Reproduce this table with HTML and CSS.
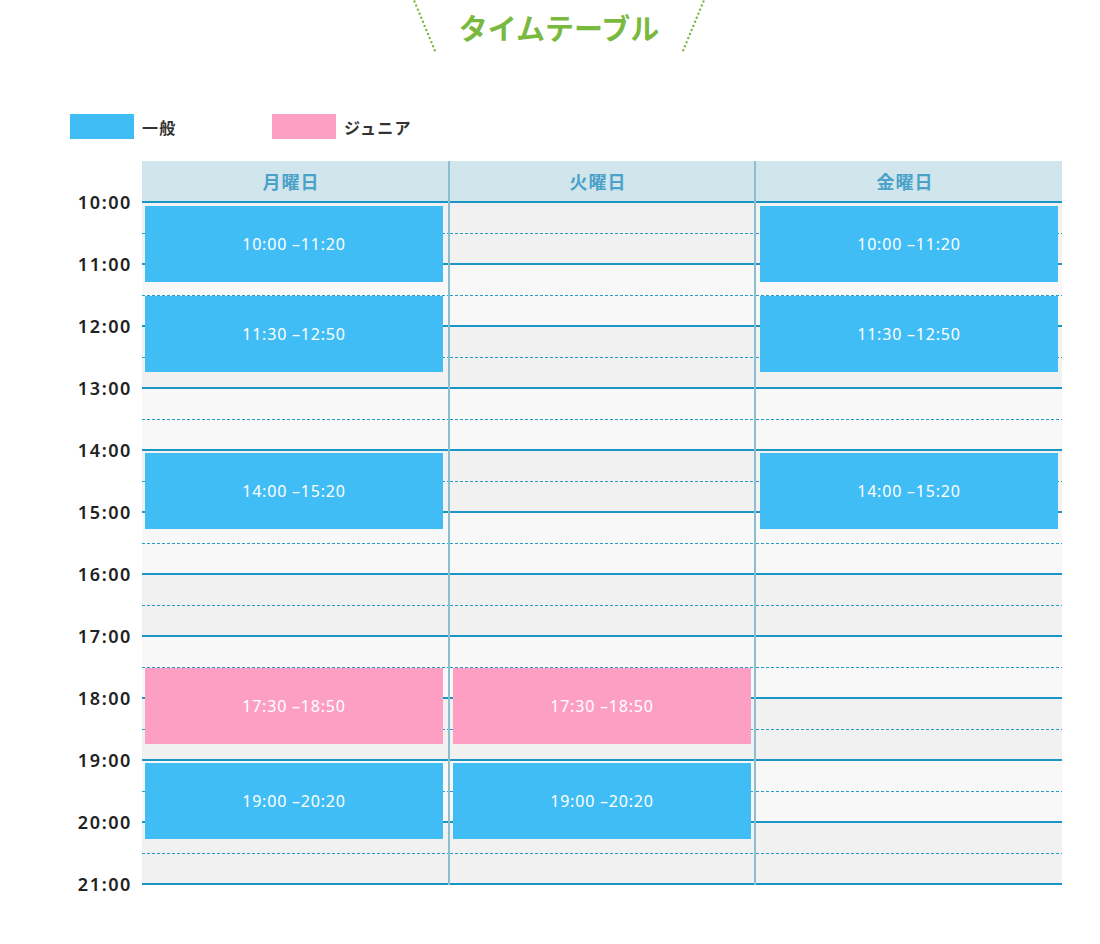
FILE: index.html
```html
<!DOCTYPE html>
<html lang="ja">
<head>
<meta charset="utf-8">
<title>タイムテーブル</title>
<link rel="stylesheet" href="styles.css">
</head>
<body>
<div class="page">
  <div class="title-row">
    <svg class="deco" width="24" height="54" viewBox="0 0 24 54"><line x1="1.5" y1="1.5" x2="22.5" y2="52" stroke="#7ab940" stroke-width="2.4" stroke-linecap="round" stroke-dasharray="0 4.4"/></svg>
    <h1 class="title">タイムテーブル</h1>
    <svg class="deco" width="24" height="54" viewBox="0 0 24 54"><line x1="22.5" y1="1.5" x2="1.5" y2="52" stroke="#7ab940" stroke-width="2.4" stroke-linecap="round" stroke-dasharray="0 4.4"/></svg>
  </div>

  <div class="legend">
    <div class="legend-item"><span class="swatch swatch-general"></span><span class="legend-label">一般</span></div>
    <div class="legend-item"><span class="swatch swatch-junior"></span><span class="legend-label">ジュニア</span></div>
  </div>

  <div class="schedule">
    <div class="times">
      <div class="time">10:00</div>
      <div class="time">11:00</div>
      <div class="time">12:00</div>
      <div class="time">13:00</div>
      <div class="time">14:00</div>
      <div class="time">15:00</div>
      <div class="time">16:00</div>
      <div class="time">17:00</div>
      <div class="time">18:00</div>
      <div class="time">19:00</div>
      <div class="time">20:00</div>
      <div class="time">21:00</div>
    </div>

    <div class="table">
      <div class="col col-mon">
        <div class="col-head">月曜日</div>
        <div class="col-body">
          <div class="hour"><div class="half half-top"></div><div class="half half-bottom"></div></div>
          <div class="hour hour-alt"><div class="half half-top"></div><div class="half half-bottom"></div></div>
          <div class="hour"><div class="half half-top"></div><div class="half half-bottom"></div></div>
          <div class="hour hour-alt"><div class="half half-top"></div><div class="half half-bottom"></div></div>
          <div class="hour"><div class="half half-top"></div><div class="half half-bottom"></div></div>
          <div class="hour hour-alt"><div class="half half-top"></div><div class="half half-bottom"></div></div>
          <div class="hour"><div class="half half-top"></div><div class="half half-bottom"></div></div>
          <div class="hour hour-alt"><div class="half half-top"></div><div class="half half-bottom"></div></div>
          <div class="hour"><div class="half half-top"></div><div class="half half-bottom"></div></div>
          <div class="hour hour-alt"><div class="half half-top"></div><div class="half half-bottom"></div></div>
          <div class="hour"><div class="half half-top"></div><div class="half half-bottom"></div></div>
          <div class="event event-general" style="top:5px">10:00 –11:20</div>
          <div class="event event-general" style="top:95px">11:30 –12:50</div>
          <div class="event event-general" style="top:252px">14:00 –15:20</div>
          <div class="event event-junior" style="top:467px">17:30 –18:50</div>
          <div class="event event-general" style="top:562px">19:00 –20:20</div>
        </div>
      </div>

      <div class="col col-tue">
        <div class="col-head">火曜日</div>
        <div class="col-body">
          <div class="hour"><div class="half half-top"></div><div class="half half-bottom"></div></div>
          <div class="hour hour-alt"><div class="half half-top"></div><div class="half half-bottom"></div></div>
          <div class="hour"><div class="half half-top"></div><div class="half half-bottom"></div></div>
          <div class="hour hour-alt"><div class="half half-top"></div><div class="half half-bottom"></div></div>
          <div class="hour"><div class="half half-top"></div><div class="half half-bottom"></div></div>
          <div class="hour hour-alt"><div class="half half-top"></div><div class="half half-bottom"></div></div>
          <div class="hour"><div class="half half-top"></div><div class="half half-bottom"></div></div>
          <div class="hour hour-alt"><div class="half half-top"></div><div class="half half-bottom"></div></div>
          <div class="hour"><div class="half half-top"></div><div class="half half-bottom"></div></div>
          <div class="hour hour-alt"><div class="half half-top"></div><div class="half half-bottom"></div></div>
          <div class="hour"><div class="half half-top"></div><div class="half half-bottom"></div></div>
          <div class="event event-junior" style="top:467px">17:30 –18:50</div>
          <div class="event event-general" style="top:562px">19:00 –20:20</div>
        </div>
      </div>

      <div class="col col-fri">
        <div class="col-head">金曜日</div>
        <div class="col-body">
          <div class="hour"><div class="half half-top"></div><div class="half half-bottom"></div></div>
          <div class="hour hour-alt"><div class="half half-top"></div><div class="half half-bottom"></div></div>
          <div class="hour"><div class="half half-top"></div><div class="half half-bottom"></div></div>
          <div class="hour hour-alt"><div class="half half-top"></div><div class="half half-bottom"></div></div>
          <div class="hour"><div class="half half-top"></div><div class="half half-bottom"></div></div>
          <div class="hour hour-alt"><div class="half half-top"></div><div class="half half-bottom"></div></div>
          <div class="hour"><div class="half half-top"></div><div class="half half-bottom"></div></div>
          <div class="hour hour-alt"><div class="half half-top"></div><div class="half half-bottom"></div></div>
          <div class="hour"><div class="half half-top"></div><div class="half half-bottom"></div></div>
          <div class="hour hour-alt"><div class="half half-top"></div><div class="half half-bottom"></div></div>
          <div class="hour"><div class="half half-top"></div><div class="half half-bottom"></div></div>
          <div class="event event-general" style="top:5px">10:00 –11:20</div>
          <div class="event event-general" style="top:95px">11:30 –12:50</div>
          <div class="event event-general" style="top:252px">14:00 –15:20</div>
        </div>
      </div>
    </div>
  </div>
</div>
</body>
</html>
```

FILE: styles.css
```css
html, body {
  margin: 0;
  padding: 0;
  background: #ffffff;
}

body {
  font-family: "Noto Sans", "Noto Sans CJK JP", sans-serif;
  color: #333333;
}

.page {
  width: 1100px;
}

/* Title */
.title-row {
  display: flex;
  justify-content: center;
  align-items: flex-start;
  gap: 22px;
  height: 54px;
  padding-left: 18px;
}

.deco {
  display: block;
  flex: none;
}

.title {
  margin: 0;
  font-family: "Noto Sans CJK JP", sans-serif;
  font-weight: 700;
  font-size: 29px;
  line-height: 54px;
  color: #7ab940;
  letter-spacing: 0;
}

/* Legend */
.legend {
  display: flex;
  margin-top: 60px;
  padding-left: 70px;
  height: 25px;
}

.legend-item {
  display: flex;
  align-items: center;
  width: 202px;
}

.swatch {
  display: block;
  width: 64px;
  height: 25px;
}

.swatch-general {
  background: #41bdf6;
}

.swatch-junior {
  background: #fc9fc3;
}

.legend-label {
  margin-left: 8px;
  font-family: "Noto Sans CJK JP", sans-serif;
  font-weight: 700;
  font-size: 16px;
  color: #333333;
  letter-spacing: 1.2px;
}

/* Schedule */
.schedule {
  display: flex;
  align-items: flex-start;
  margin-top: 22px;
}

.times {
  width: 142px;
  flex: none;
  padding-top: 10px;
  box-sizing: border-box;
}

.time {
  height: 62px;
  line-height: 62px;
  text-align: right;
  padding-right: 10px;
  font-family: "Noto Sans", sans-serif;
  font-weight: 600;
  font-size: 18px;
  letter-spacing: 1.6px;
  color: #222222;
}

.table {
  display: flex;
  align-items: flex-start;
  width: 920px;
}

.col {
  box-sizing: border-box;
  flex: none;
}

.col-mon {
  width: 306px;
}

.col-tue {
  width: 306px;
  border-left: 2px solid #8dbecf;
}

.col-fri {
  width: 308px;
  border-left: 2px solid #8dbecf;
}

.col-head {
  height: 40px;
  background: #d1e5ec;
  display: flex;
  align-items: center;
  justify-content: center;
  padding-right: 8px;
  font-family: "Noto Sans CJK JP", sans-serif;
  font-weight: 700;
  font-size: 18px;
  letter-spacing: 1px;
  color: #4aa2c9;
}

.col-body {
  position: relative;
  border-bottom: 2px solid #1b95c4;
}

.hour {
  background: #f1f1f1;
}

.hour-alt {
  background: #f8f8f8;
}

.half {
  box-sizing: border-box;
}

.half-top {
  height: 32px;
  border-top: 2px solid #1b95c4;
}

.half-bottom {
  height: 30px;
  background-image: repeating-linear-gradient(to right, #2a9bc5 0, #2a9bc5 3px, transparent 3px, transparent 5px);
  background-size: 100% 1px;
  background-repeat: no-repeat;
  background-position: top left;
}

.event {
  position: absolute;
  left: 3px;
  width: 298px;
  height: 76px;
  display: flex;
  align-items: center;
  justify-content: center;
  color: #ffffff;
  font-family: "Noto Sans", sans-serif;
  font-weight: 400;
  font-size: 16px;
  letter-spacing: 0.8px;
}

.col-fri .event {
  left: 4px;
}

.event-general {
  background: #41bdf6;
}

.event-junior {
  background: #fc9fc3;
}
```
